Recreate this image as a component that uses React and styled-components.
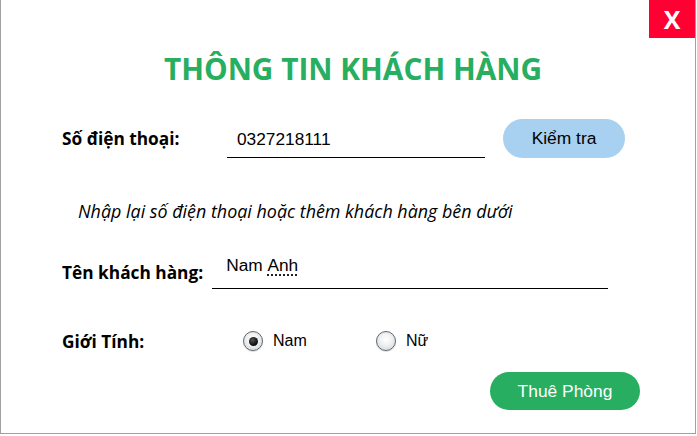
import React, { useState } from 'react'
import styled, { createGlobalStyle } from 'styled-components'

const GlobalStyle = createGlobalStyle`
  body {
    margin: 0;
    background: #ffffff;
  }
`

const Window = styled.div`
  position: relative;
  box-sizing: border-box;
  width: 696px;
  height: 434px;
  background: #ffffff;
  border: 1px solid #a0a0a0;
  border-top: none;
  display: flex;
  flex-direction: column;
  font-family: "Open Sans", "Liberation Sans", sans-serif;
  color: #000;
`

const TopBar = styled.div`
  display: flex;
  justify-content: flex-end;
  height: 38px;
`

const CloseButton = styled.button`
  width: 46px;
  height: 38px;
  border: none;
  padding: 0;
  background: #ff0033;
  color: #ffffff;
  font-family: "Open Sans", sans-serif;
  font-weight: 700;
  font-size: 25px;
  line-height: 38px;
  cursor: pointer;
`

const Title = styled.h1`
  margin: 11px 0 0 10px;
  text-align: center;
  color: #27ae60;
  font-family: "Open Sans", sans-serif;
  font-weight: 700;
  font-size: 29.8px;
  line-height: 40px;
`

const Form = styled.div`
  display: flex;
  flex-direction: column;
  padding-left: 61px;
  margin-top: 29px;
`

const Row = styled.div`
  display: flex;
  align-items: center;
  height: ${p => p.$h || 40}px;
  margin-top: ${p => p.$mt || 0}px;
`

const Label = styled.label`
  flex: none;
  width: ${p => (p.$w ? `${p.$w}px` : 'auto')};
  margin-right: ${p => p.$mr || 0}px;
  font-family: "Open Sans", sans-serif;
  font-weight: 700;
  font-size: 17.3px;
`

const Field = styled.div`
  box-sizing: border-box;
  width: ${p => p.$w}px;
  height: 100%;
  display: flex;
  align-items: ${p => p.$align || 'center'};
  padding-left: ${p => p.$pl || 10}px;
  padding-top: ${p => p.$pt || 0}px;
  border-bottom: 1px solid #000;
  font-family: "Liberation Sans", Arial, sans-serif;
  font-size: 17.3px;
`

const Misspelled = styled.span`
  text-decoration: underline dotted #000;
  text-underline-offset: 4px;
`

const PillButton = styled.button`
  flex: none;
  width: ${p => p.$w}px;
  height: ${p => p.$h}px;
  margin-left: ${p => p.$ml || 0}px;
  border: none;
  border-radius: 20px;
  background: ${p => p.$bg};
  color: ${p => p.$color};
  font-family: "Liberation Sans", Arial, sans-serif;
  font-size: 17.4px;
  cursor: pointer;
`

const Hint = styled.p`
  margin: 41px 0 0 16px;
  font-family: "Open Sans", sans-serif;
  font-style: italic;
  font-size: 17.9px;
  line-height: 24px;
`

const RadioGroup = styled.div`
  display: flex;
  align-items: center;
`

const RadioOption = styled.label`
  display: flex;
  align-items: center;
  width: ${p => p.$w || 'auto'};
  font-family: "Liberation Sans", Arial, sans-serif;
  font-size: 16px;
  cursor: pointer;
`

const RadioCircle = styled.span`
  box-sizing: border-box;
  width: 20px;
  height: 20px;
  margin-right: 10px;
  border-radius: 50%;
  border: 1px solid #5f6770;
  background: radial-gradient(circle at 50% 40%, #ffffff 0%, #f0f0f0 45%, #c5cad0 100%);
  box-shadow: inset 0 0 0 1px #e4e7ea, 0 1px 1px rgba(0, 0, 0, 0.15);
  display: flex;
  align-items: center;
  justify-content: center;

  &::after {
    content: '';
    display: ${p => (p.$checked ? 'block' : 'none')};
    width: 9px;
    height: 9px;
    border-radius: 50%;
    background: radial-gradient(circle at 40% 35%, #555 0%, #111 60%, #000 100%);
  }
`

const Footer = styled.div`
  display: flex;
  justify-content: flex-end;
  padding-right: 55px;
  margin-top: 16px;
`

export default function App() {
  const [gender, setGender] = useState('nam')

  return (
    <>
      <GlobalStyle />
      <Window>
        <TopBar>
          <CloseButton>X</CloseButton>
        </TopBar>
        <Title>THÔNG TIN KHÁCH HÀNG</Title>

        <Form>
          <Row $h={40}>
            <Label $w={165}>Số điện thoại:</Label>
            <Field $w={258} $pt={4}>0327218111</Field>
            <PillButton $w={122} $h={39} $ml={18} $bg="#a8d0f0" $color="#000">
              Kiểm tra
            </PillButton>
          </Row>

          <Hint>Nhập lại số điện thoại hoặc thêm khách hàng bên dưới</Hint>

          <Row $h={34} $mt={32}>
            <Label $mr={9}>Tên khách hàng:</Label>
            <Field $w={396} $pl={14} $align="flex-start">
              Nam&nbsp;<Misspelled>Anh</Misspelled>
            </Field>
          </Row>

          <Row $h={30} $mt={37}>
            <Label $w={181}>Giới Tính:</Label>
            <RadioGroup>
              <RadioOption $w="133px" onClick={() => setGender('nam')}>
                <RadioCircle $checked={gender === 'nam'} />
                Nam
              </RadioOption>
              <RadioOption onClick={() => setGender('nu')}>
                <RadioCircle $checked={gender === 'nu'} />
                Nữ
              </RadioOption>
            </RadioGroup>
          </Row>
        </Form>

        <Footer>
          <PillButton $w={150} $h={38} $bg="#27ae60" $color="#fff">
            Thuê Phòng
          </PillButton>
        </Footer>
      </Window>
    </>
  )
}
